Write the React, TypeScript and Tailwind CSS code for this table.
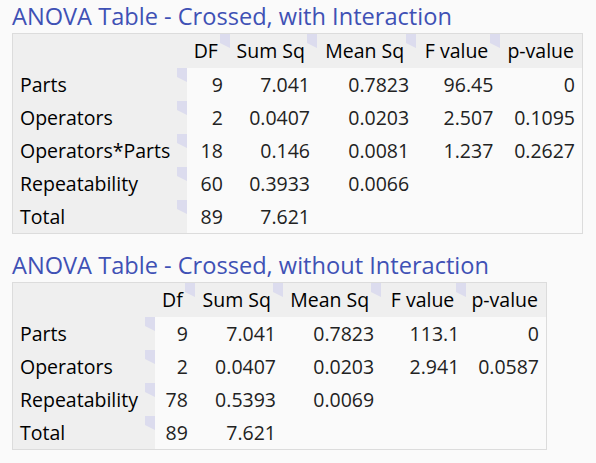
import React from "react";

type Row = { label: string; values: string[] };

const Marker = () => (
  <span className="absolute top-0 right-0 block w-[10px] h-[14px]">
    <svg width="10" height="14" viewBox="0 0 10 14" className="block">
      <polygon points="0,0 10,0 10,14 0,9" fill="#dcdcee" />
    </svg>
  </span>
);

function AnovaTable({
  title,
  headers,
  widths,
  rows,
}: {
  title: string;
  headers: string[];
  widths: number[];
  rows: Row[];
}) {
  const total = widths.reduce((a, b) => a + b, 0);
  return (
    <section>
      <h2 className="h-[33px] text-[23.6px] leading-[33px] text-[#3f51b5] whitespace-nowrap">
        {title}
      </h2>
      <table
        className="table-fixed border-collapse border border-[#dcdcdc] text-[19.5px]"
        style={{ width: total + 2 }}
      >
        <colgroup>
          {widths.map((w, i) => (
            <col key={i} style={{ width: w }} />
          ))}
        </colgroup>
        <thead>
          <tr className="h-[34px] bg-[#efefef]">
            <th className="p-0" />
            {headers.map((h, i) => {
              const last = i === headers.length - 1;
              return (
                <th
                  key={h}
                  className={
                    "relative p-0 text-right font-normal text-black whitespace-nowrap leading-[34px] " +
                    (last ? "pr-[8px]" : "pr-[12px]")
                  }
                >
                  {h}
                  {!last && <Marker />}
                </th>
              );
            })}
          </tr>
        </thead>
        <tbody>
          {rows.map((r) => (
            <tr key={r.label} className="h-[33px]">
              <td className="relative p-0 pl-[7px] bg-[#efefef] text-black whitespace-nowrap leading-[33px]">
                {r.label}
                <Marker />
              </td>
              {headers.map((_, i) => (
                <td
                  key={i}
                  className="p-0 pr-[7px] text-right text-[#222222] whitespace-nowrap leading-[33px] bg-[#fafafa]"
                >
                  {r.values[i] ?? ""}
                </td>
              ))}
            </tr>
          ))}
        </tbody>
      </table>
    </section>
  );
}

export default function App() {
  return (
    <div className="min-h-screen w-full bg-[#fafafa] pl-[12px] font-['Open_Sans',sans-serif] antialiased">
      <AnovaTable
        title="ANOVA Table - Crossed, with Interaction"
        headers={["DF", "Sum Sq", "Mean Sq", "F value", "p-value"]}
        widths={[174, 43, 87, 99, 84, 82]}
        rows={[
          { label: "Parts", values: ["9", "7.041", "0.7823", "96.45", "0"] },
          { label: "Operators", values: ["2", "0.0407", "0.0203", "2.507", "0.1095"] },
          { label: "Operators*Parts", values: ["18", "0.146", "0.0081", "1.237", "0.2627"] },
          { label: "Repeatability", values: ["60", "0.3933", "0.0066"] },
          { label: "Total", values: ["89", "7.621"] },
        ]}
      />
      <div className="h-[15px]" />
      <AnovaTable
        title="ANOVA Table - Crossed, without Interaction"
        headers={["Df", "Sum Sq", "Mean Sq", "F value", "p-value"]}
        widths={[142, 40, 88, 98, 85, 80]}
        rows={[
          { label: "Parts", values: ["9", "7.041", "0.7823", "113.1", "0"] },
          { label: "Operators", values: ["2", "0.0407", "0.0203", "2.941", "0.0587"] },
          { label: "Repeatability", values: ["78", "0.5393", "0.0069"] },
          { label: "Total", values: ["89", "7.621"] },
        ]}
      />
    </div>
  );
}
